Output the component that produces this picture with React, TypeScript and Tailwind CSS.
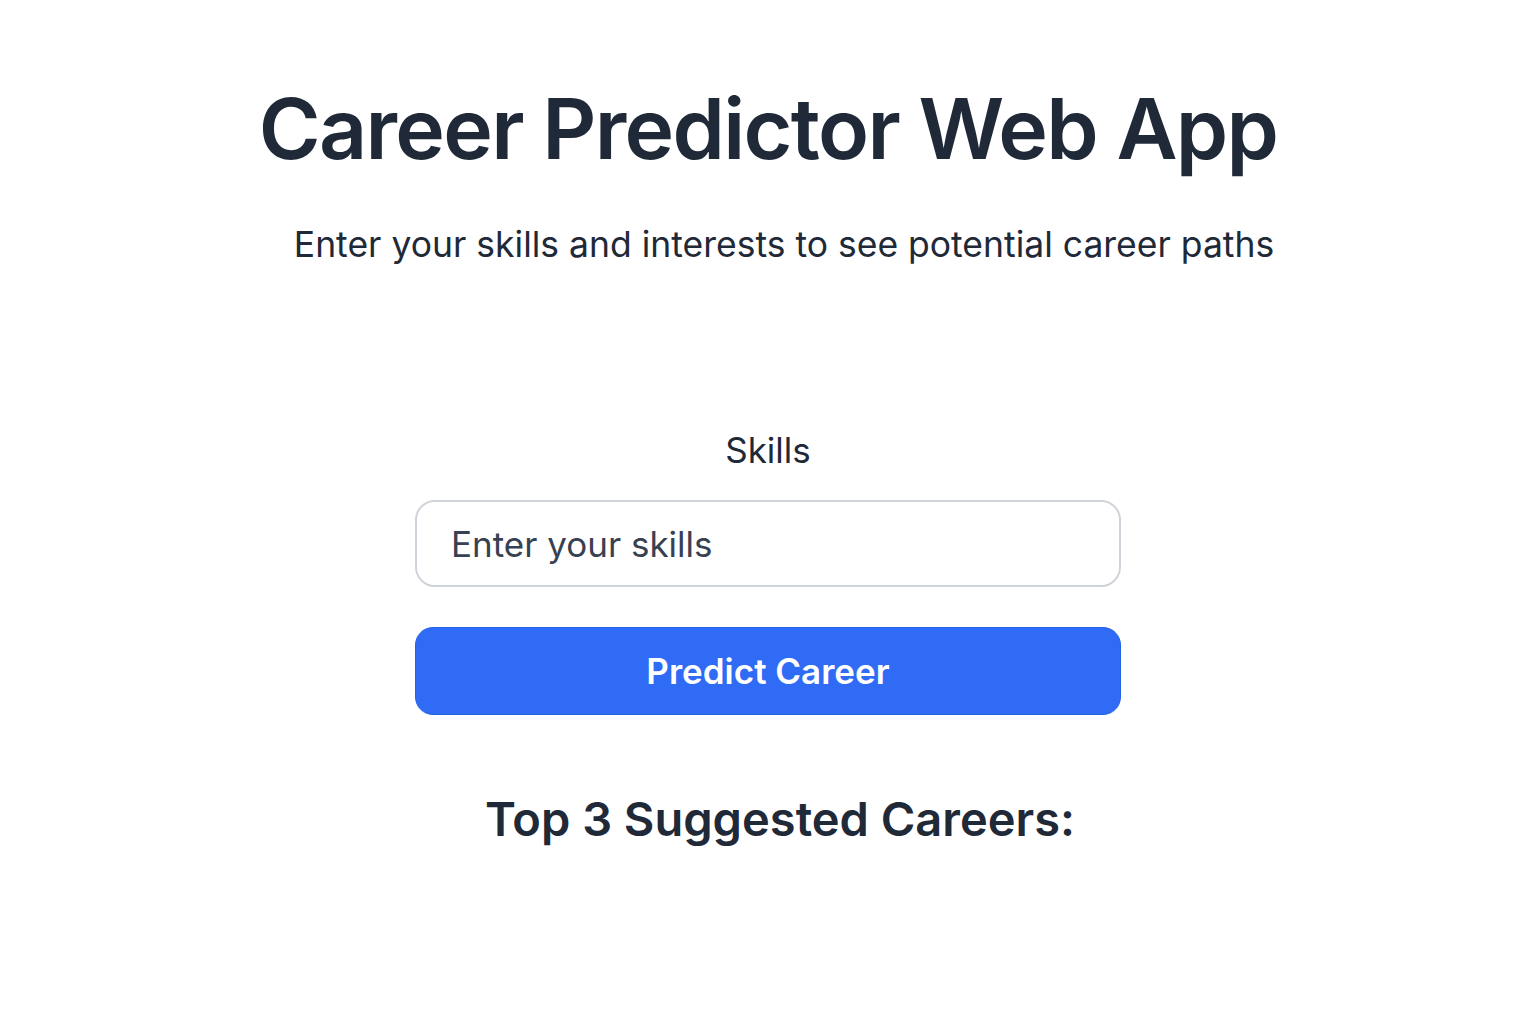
import { useState } from "react";

export default function App() {
  const [skills, setSkills] = useState("");

  return (
    <div className="min-h-screen bg-white text-[#1f2937] font-['Inter',sans-serif] flex flex-col items-center">
      <h1 className="mt-[79px] text-[84px] leading-[100px] font-semibold tracking-[-1.7px]">
        Career Predictor Web App
      </h1>

      <p className="mt-[44px] ml-[32px] text-[35.5px] leading-[44px] text-[#1f2937]">
        Enter your skills and interests to see potential career paths
      </p>

      <div className="mt-[163px] w-[706px] flex flex-col items-center">
        <label className="text-[35px] leading-[40px] text-[#1f2937]">Skills</label>

        <input
          value={skills}
          onChange={(e) => setSkills(e.target.value)}
          placeholder="Enter your skills"
          className="mt-[30px] w-full h-[87px] rounded-[20px] border-2 border-[#cfd4da] px-[34px] text-[35px] placeholder:text-[#374151] outline-none"
        />

        <button className="mt-[40px] w-full h-[88px] rounded-[18px] bg-[#2f6bf5] border border-[#2563eb] text-white text-[35px] font-semibold">
          Predict Career
        </button>
      </div>

      <h2 className="mt-[74px] ml-[24px] text-[47px] leading-[60px] font-semibold">
        Top 3 Suggested Careers:
      </h2>
    </div>
  );
}
